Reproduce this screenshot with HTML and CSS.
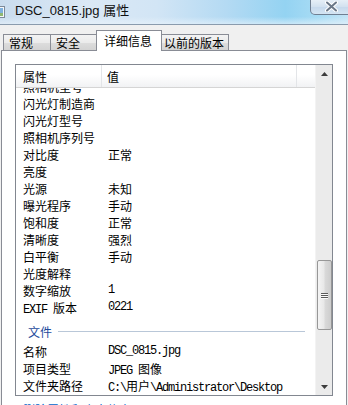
FILE: index.html
```html
<!DOCTYPE html>
<html lang="zh-CN">
<head>
  <meta charset="UTF-8" />
  <title>DSC_0815.jpg 属性</title>
  <link rel="stylesheet" href="styles.css">
</head>
<body>

<div class="titlebar">
  <svg class="app-icon" width="16" height="16" viewBox="0 0 16 16">
    <rect x="1.5" y="2.5" width="13" height="11" fill="#f4f7fa" stroke="#7d8a99"/>
    <rect x="3" y="4" width="10" height="5" fill="#7fb2de"/>
    <rect x="3" y="9" width="10" height="3" fill="#8fb870"/>
  </svg>
  <span class="title">DSC_0815.jpg 属性</span>
  <div class="close-btn">
    <svg width="13" height="11" viewBox="0 0 13 11">
      <path d="M2 1.5 L11 9.5 M11 1.5 L2 9.5" stroke="#ffffff" stroke-width="4" stroke-linecap="round"/>
      <path d="M2 1.5 L11 9.5 M11 1.5 L2 9.5" stroke="#6b7888" stroke-width="2" stroke-linecap="round"/>
    </svg>
  </div>
</div>

<div class="tabs">
  <div class="tab tab-general">常规</div>
  <div class="tab tab-security">安全</div>
  <div class="tab tab-details active">详细信息</div>
  <div class="tab tab-versions">以前的版本</div>
</div>

<div class="panel">
  <div class="listbox">
    <div class="list-main">
      <div class="list-head">
        <div class="head-cell head-name">属性</div>
        <div class="head-cell head-value">值</div>
        <div class="head-cell head-rest"></div>
      </div>
      <div class="list-body">
        <div class="rows">
          <div class="row"><div class="name">照相机型号</div><div class="value"></div></div>
          <div class="row"><div class="name">闪光灯制造商</div><div class="value"></div></div>
          <div class="row"><div class="name">闪光灯型号</div><div class="value"></div></div>
          <div class="row"><div class="name">照相机序列号</div><div class="value"></div></div>
          <div class="row"><div class="name">对比度</div><div class="value">正常</div></div>
          <div class="row"><div class="name">亮度</div><div class="value"></div></div>
          <div class="row"><div class="name">光源</div><div class="value">未知</div></div>
          <div class="row"><div class="name">曝光程序</div><div class="value">手动</div></div>
          <div class="row"><div class="name">饱和度</div><div class="value">正常</div></div>
          <div class="row"><div class="name">清晰度</div><div class="value">强烈</div></div>
          <div class="row"><div class="name">白平衡</div><div class="value">手动</div></div>
          <div class="row"><div class="name">光度解释</div><div class="value"></div></div>
          <div class="row"><div class="name">数字缩放</div><div class="value mono">1</div></div>
          <div class="row"><div class="name mono">EXIF <span class="cjk">版本</span></div><div class="value mono">0221</div></div>

          <div class="group">
            <span class="group-title">文件</span>
            <span class="group-line"></span>
          </div>

          <div class="row"><div class="name">名称</div><div class="value mono">DSC_0815.jpg</div></div>
          <div class="row"><div class="name">项目类型</div><div class="value mono">JPEG <span class="cjk">图像</span></div></div>
          <div class="row"><div class="name">文件夹路径</div><div class="value mono">C:\<span class="cjk">用户</span>\Administrator\Desktop</div></div>
        </div>
      </div>
    </div>

    <div class="scrollbar">
      <div class="sb-btn">
        <svg width="7" height="4" viewBox="0 0 7 4"><path d="M0 4 L3.5 0 L7 4 Z" fill="#3c3c3c"/></svg>
      </div>
      <div class="sb-track">
        <div class="sb-thumb">
          <span class="grip"></span>
          <span class="grip"></span>
          <span class="grip"></span>
        </div>
      </div>
      <div class="sb-btn">
        <svg width="7" height="4" viewBox="0 0 7 4"><path d="M0 0 L7 0 L3.5 4 Z" fill="#3c3c3c"/></svg>
      </div>
    </div>
  </div>

  <a class="remove-link">删除属性和个人信息</a>
</div>

</body>
</html>
```

FILE: styles.css
```css
* {
  box-sizing: border-box;
}

html,
body {
  margin: 0;
  padding: 0;
  overflow: hidden;
}

body {
  width: 348px;
  height: 405px;
  font-family: "Noto Sans CJK SC", sans-serif;
  font-size: 12px;
  color: #000;
  background: #f0f0f0;
}

/* title bar */

.titlebar {
  height: 25px;
  display: flex;
  align-items: flex-start;
  border-bottom: 1px solid #8a9bad;
  background:
    linear-gradient(180deg, rgba(255, 255, 255, 0) 70%, rgba(235, 244, 251, 0.6) 100%),
    linear-gradient(90deg, #c9dcee 0%, #dbe8f5 25%, #d2e5f5 45%, #b4daf3 65%, #94d3f2 82%, #a9dcf4 92%, #c3e4f6 100%);
}

.app-icon {
  margin: 4px 0 0 -10px;
  flex-shrink: 0;
}

.title {
  margin-left: 9px;
  font-family: "Liberation Sans", "Noto Sans CJK SC", sans-serif;
  font-size: 13px;
  line-height: 22px;
  color: #111;
  white-space: nowrap;
}

.close-btn {
  margin: -1px -4px 0 auto;
  width: 42px;
  height: 16px;
  display: flex;
  align-items: center;
  justify-content: center;
  border: 1px solid #6f7f92;
  border-top: none;
  border-radius: 0 0 0 5px;
  background: linear-gradient(180deg, #e9f1f8, #d3e2f0 50%, #c5d8ec 51%, #d4e5f3);
}

/* tabs */

.tabs {
  height: 25px;
  display: flex;
  align-items: flex-end;
  padding-left: 3px;
}

.tab {
  height: 16px;
  line-height: 16px;
  padding-left: 5px;
  border: 1px solid #898c95;
  border-bottom: none;
  background: linear-gradient(180deg, #f3f3f3, #ebebeb 50%, #dddddd 51%, #d3d3d3);
  white-space: nowrap;
}

.tab-general {
  width: 48px;
}

.tab-security {
  width: 48px;
  margin-left: -1px;
}

.tab-details {
  width: 66px;
  margin-left: -2px;
}

.tab-versions {
  width: 68px;
  margin-left: -1px;
  padding-left: 2px;
}

.tab.active {
  height: 21px;
  line-height: 20px;
  padding-left: 7px;
  margin-bottom: -1px;
  background: #fff;
  position: relative;
  z-index: 1;
}

/* panel */

.panel {
  margin-left: 1px;
  width: 346px;
  height: 400px;
  padding: 13px 13px 0;
  background: #fff;
  border: 1px solid #898c95;
}

.listbox {
  height: 332px;
  display: flex;
  border: 1px solid #828790;
  background: #fff;
}

.list-main {
  flex: 1;
  display: flex;
  flex-direction: column;
  min-width: 0;
}

.list-head {
  height: 23px;
  display: flex;
  border-bottom: 1px solid #d5d5d5;
  background: linear-gradient(180deg, #ffffff, #ffffff 45%, #f1f2f4);
}

.head-cell {
  line-height: 22px;
  padding-top: 1px;
  border-right: 1px solid #e3e5e8;
}

.head-name {
  width: 86px;
  padding-left: 7px;
}

.head-value {
  width: 195px;
  padding-left: 5px;
}

.head-rest {
  flex: 1;
  border-right: none;
}

.list-body {
  flex: 1;
  overflow: hidden;
}

.rows {
  margin-top: -10px;
}

.row {
  height: 17px;
  display: flex;
  line-height: 17px;
  white-space: nowrap;
}

.name {
  width: 92px;
  padding-left: 7px;
  flex-shrink: 0;
}

.value {
  flex: 1;
}

.mono {
  font-family: "Liberation Mono", "Noto Sans CJK SC", monospace;
  letter-spacing: -1.2px;
}

.mono .cjk {
  font-family: "Noto Sans CJK SC", sans-serif;
  letter-spacing: 0;
}

.group {
  height: 27px;
  display: flex;
  align-items: center;
  padding: 3px 10px 0 12px;
}

.group-title {
  color: #1e4b9c;
  line-height: 17px;
}

.group-line {
  flex: 1;
  height: 1px;
  margin-left: 6px;
  background: #b9c7d8;
}

/* scrollbar */

.scrollbar {
  width: 17px;
  display: flex;
  flex-direction: column;
  background: #ebebeb;
  border-left: 1px solid #f3f3f3;
}

.sb-btn {
  height: 17px;
  display: flex;
  align-items: center;
  justify-content: center;
}

.sb-track {
  flex: 1;
  padding-top: 178px;
  display: flex;
  justify-content: center;
}

.sb-thumb {
  width: 15px;
  height: 70px;
  display: flex;
  flex-direction: column;
  align-items: center;
  justify-content: center;
  gap: 1px;
  border: 1px solid #979797;
  border-radius: 2px;
  background: linear-gradient(90deg, #f4f4f4, #e8e8e8 45%, #d9d9d9 55%, #cdcdcd);
}

.grip {
  width: 7px;
  height: 1px;
  background: #5a5a5a;
  box-shadow: 0 1px 0 #fafafa;
}

.remove-link {
  display: block;
  margin: 5px 0 0 8px;
  line-height: 17px;
  color: #0066cc;
}
```
